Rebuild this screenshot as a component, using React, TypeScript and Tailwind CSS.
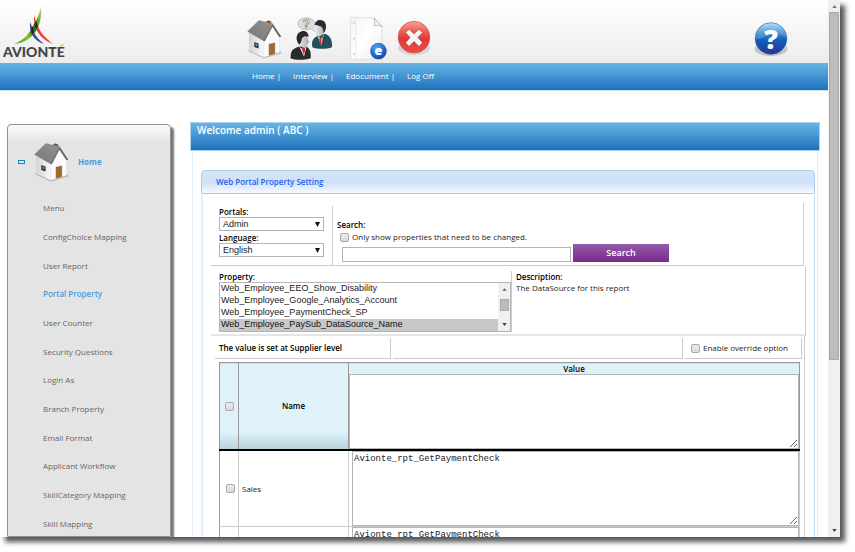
import type { ReactNode } from "react";
import clsx from "clsx";

const NAV_LINKS = ["Home |", "Interview |", "Edocument |", "Log Off"];

const MENU_ITEMS = [
  "Menu",
  "ConfigChoice Mapping",
  "User Report",
  "Portal Property",
  "User Counter",
  "Security Questions",
  "Login As",
  "Branch Property",
  "Email Format",
  "Applicant Workflow",
  "SkillCategory Mapping",
  "Skill Mapping",
];

const PROPERTIES = [
  "Web_Employee_EEO_Show_Disability",
  "Web_Employee_Google_Analytics_Account",
  "Web_Employee_PaymentCheck_SP",
  "Web_Employee_PaySub_DataSource_Name",
];

const ROWS = [
  { id: "row-1", name: "Sales", value: "Avionte_rpt_GetPaymentCheck" },
  { id: "row-2", name: "", value: "Avionte_rpt_GetPaymentCheck" },
];

function Logo() {
  return (
    <svg viewBox="0 0 64 54" className="h-[54px] w-16" role="img" aria-label="Avionte">
      <defs>
        <linearGradient id="logo-green" x1="0" y1="1" x2="1" y2="0">
          <stop offset="0" stopColor="#2f9a2c" />
          <stop offset="0.35" stopColor="#8cc22e" />
          <stop offset="0.55" stopColor="#2c7a2b" />
          <stop offset="0.75" stopColor="#5aa53a" />
          <stop offset="1" stopColor="#dbe66a" />
        </linearGradient>
        <linearGradient id="logo-word" gradientUnits="userSpaceOnUse" x1="0" y1="30" x2="0" y2="50">
          <stop offset="0.48" stopColor="#b4cf3a" />
          <stop offset="0.48" stopColor="#454547" />
        </linearGradient>
      </defs>
      <path d="M38 0C36 8 33 14 30 19C26 27 20 34 11 37C20 36 28 32 33 24C37 17 39 9 38 0Z" fill="url(#logo-green)" />
      <path d="M27 15C26 26 31 34 41 37C35 32 31 27 30 22Z" fill="#3a4ba0" />
      <path d="M31 8C30 20 36 32 50 37C41 30 37 25 35 19C33 15 32 12 31 8Z" fill="#ee3a30" />
      <path d="M28 22L30 19L31 25L29 28Z" fill="#1d2b1a" />
      <path d="M31 17L33 14L35 19L33 23Z" fill="#3d2a14" />
      <text x="0" y="50" fontFamily="Lato, sans-serif" fontWeight="900" fontSize="14" fill="url(#logo-word)">
        AVIONTÉ
      </text>
    </svg>
  );
}

function HouseIcon() {
  return (
    <svg viewBox="102 84 106 120" className="h-10 w-[35px] shrink-0" aria-hidden="true">
      <defs>
        <linearGradient id="roof" x1="0" y1="1" x2="1" y2="0">
          <stop offset="0" stopColor="#777" />
          <stop offset="1" stopColor="#929292" />
        </linearGradient>
        <linearGradient id="wall" x1="0" y1="0" x2="1" y2="0">
          <stop offset="0" stopColor="#d2d2d2" />
          <stop offset="1" stopColor="#fafafa" />
        </linearGradient>
      </defs>
      <path d="M104 180L153 203L207 187L203 180L153 197L110 176Z" fill="#8c8c8c" opacity="0.5" />
      <path d="M160 91L167 88L176 92V108L160 104Z" fill="#c9742d" />
      <path d="M160 91L167 88L176 92L169 95Z" fill="#6d4a32" />
      <path d="M108 124L153 147V199L108 179Z" fill="url(#wall)" />
      <path d="M179 99L201 136V184L153 199V147Z" fill="#fbfbfb" stroke="#d5d5d5" strokeWidth="1" />
      <path d="M104 121L138 88L180 98L153 150Z" fill="url(#roof)" stroke="#666" strokeWidth="1" />
      <path d="M180 98L206 137L200 139L179 107L156 151L152 150Z" fill="#666" />
      <path d="M124 153L137 158V173L124 168Z" fill="#293542" />
      <path d="M128 157L133 159V166L128 164Z" fill="#8397aa" />
      <path d="M169 160L186 156V188L169 193Z" fill="#a2682c" stroke="#7c5023" strokeWidth="1.5" />
    </svg>
  );
}

function InterviewIcon() {
  return (
    <svg viewBox="162 48 132 134" className="h-[45px] w-11" aria-hidden="true">
      <defs>
        <linearGradient id="face" x1="0" y1="0" x2="1" y2="0">
          <stop offset="0" stopColor="#f5f5f5" />
          <stop offset="1" stopColor="#a8a8a8" />
        </linearGradient>
      </defs>
      <path d="M240 72C240 60 228 53 213 53C199 53 189 61 189 71C189 81 200 89 213 89C219 89 224 88 228 86L242 94L236 81C239 79 240 75 240 72Z" fill="#dcdcdc" stroke="#aaa" strokeWidth="2" />
      <text x="214" y="84" textAnchor="middle" fontFamily="Liberation Sans, sans-serif" fontWeight="700" fontSize="36" fill="#fff" stroke="#808080" strokeWidth="2">
        ?
      </text>
      <path d="M232 141C229 122 234 114 249 107L270 101C287 108 292 120 291 141C274 147 246 147 232 141Z" fill="#23505b" />
      <path d="M248 108L259 115L268 102L259 137Z" fill="#eee" />
      <path d="M253 114L259 112L260 136L254 129Z" fill="#d8292e" />
      <path d="M239 77C240 67 249 62 260 64C271 67 273 81 268 94C264 105 252 112 246 107C241 103 241 96 240 91L236 88Z" fill="url(#face)" />
      <path d="M239 75C240 62 252 56 263 61C273 65 276 79 270 93L266 99C265 89 264 83 259 79C252 78 247 72 239 75Z" fill="#292b2e" />
      <path d="M262 112L271 103L262 137Z" fill="#16434d" opacity="0.7" />
      <path d="M167 175C166 155 170 148 186 141L209 136C224 143 229 154 227 174C208 180 183 181 167 175Z" fill="#2b2b2c" />
      <path d="M193 140L205 148L215 138L207 169Z" fill="#eee" />
      <path d="M202 140L209 137L211 151L206 163L201 149Z" fill="#d22d30" />
      <path d="M192 107C202 99 218 102 219 117L223 126L219 129C218 139 213 144 205 142C195 139 187 129 187 115Z" fill="url(#face)" />
      <path d="M188 127C181 111 186 97 200 93C211 90 221 97 221 110C213 107 206 108 202 113C199 119 200 127 193 134Z" fill="#28292a" />
    </svg>
  );
}

function DocumentIcon() {
  return (
    <svg viewBox="342 48 118 134" className="h-[45px] w-[39px]" aria-hidden="true">
      <defs>
        <linearGradient id="paper" x1="0" y1="0" x2="1" y2="1">
          <stop offset="0" stopColor="#f4f4f4" />
          <stop offset="0.5" stopColor="#fff" />
          <stop offset="1" stopColor="#ececec" />
        </linearGradient>
        <radialGradient id="e-ball" cx="0.4" cy="0.3" r="0.75">
          <stop offset="0" stopColor="#56a2ee" />
          <stop offset="1" stopColor="#0a42a5" />
        </radialGradient>
      </defs>
      <path d="M347 52H417L442 79V178H347Z" fill="url(#paper)" stroke="#d6d6d6" strokeWidth="2" />
      <path d="M363 53V177" stroke="#dedede" strokeWidth="2" />
      <path d="M417 53C421 63 420 70 418 76C427 74 434 75 442 79Z" fill="#f8f8f8" stroke="#999" strokeWidth="2" />
      <circle cx="357" cy="67" r="3" fill="#ccc" />
      <circle cx="357" cy="115" r="3" fill="#ccc" />
      <circle cx="357" cy="162" r="3" fill="#ccc" />
      <circle cx="431" cy="153" r="25" fill="url(#e-ball)" />
      <text x="431" y="164" textAnchor="middle" fontFamily="Open Sans, sans-serif" fontWeight="800" fontSize="38" fill="#fff">
        e
      </text>
    </svg>
  );
}

function LogOffIcon() {
  return (
    <svg viewBox="484 60 108 112" className="h-[37px] w-9" aria-hidden="true">
      <defs>
        <linearGradient id="red-ball" x1="0" y1="0" x2="0" y2="1">
          <stop offset="0" stopColor="#f4a39b" />
          <stop offset="0.3" stopColor="#ed625b" />
          <stop offset="0.55" stopColor="#e03a35" />
          <stop offset="1" stopColor="#ed4d42" />
        </linearGradient>
      </defs>
      <ellipse cx="538" cy="144" rx="48" ry="23" fill="#999" opacity="0.3" />
      <circle cx="538" cy="112" r="48" fill="url(#red-ball)" stroke="#cf5149" strokeWidth="2" />
      <path d="M512 98L523 87L538 102L553 87L564 98L550 113L564 129L553 140L538 125L523 140L512 129L526 113Z" fill="#f5f5f5" stroke="#b43733" strokeWidth="2" />
    </svg>
  );
}

function HelpIcon() {
  return (
    <svg viewBox="160 62 108 112" className="h-[37px] w-9" aria-hidden="true">
      <defs>
        <linearGradient id="help-ball" x1="0" y1="0" x2="0" y2="1">
          <stop offset="0" stopColor="#a5ddf8" />
          <stop offset="0.3" stopColor="#3f8dda" />
          <stop offset="0.55" stopColor="#125dbb" />
          <stop offset="1" stopColor="#26348f" />
        </linearGradient>
      </defs>
      <ellipse cx="214" cy="147" rx="50" ry="21" fill="#777" opacity="0.35" />
      <circle cx="214" cy="115" r="48" fill="url(#help-ball)" stroke="#2164af" strokeWidth="2" />
      <path d="M167 116C185 121 206 99 230 101C246 102 255 107 261 113C259 79 237 68 214 69C185 70 166 90 167 116Z" fill="#fff" opacity="0.16" />
      <text x="214" y="147" textAnchor="middle" fontFamily="Open Sans, sans-serif" fontWeight="800" fontSize="82" fill="#fff">
        ?
      </text>
    </svg>
  );
}

function Arrow({ up = false }: { up?: boolean }) {
  return (
    <svg viewBox="0 0 6 4" className="h-[3px] w-[5px]" aria-hidden="true">
      <path d={up ? "M0 4L3 0L6 4Z" : "M0 0H6L3 4Z"} fill={up ? "#777" : "#444"} />
    </svg>
  );
}

function Checkbox({ label, id }: { label?: string; id: string }) {
  return (
    <input
      type="checkbox"
      id={id}
      aria-label={label}
      className="size-[9px] shrink-0 appearance-none rounded-[2px] border border-[#a9a9a9] bg-linear-to-b from-[#ededed] to-[#d9d9d9] checked:bg-[#888]"
    />
  );
}

function Dropdown({ id, label, value }: { id: string; label: string; value: string }) {
  return (
    <div>
      <label htmlFor={id} className="block h-[11px] font-semibold leading-[11px] text-black">
        {label}
      </label>
      <div className="grid items-center">
        <select
          id={id}
          className="col-start-1 row-start-1 h-[14px] w-full appearance-none border border-[#b5b5b5] bg-white px-[3px] font-['Liberation_Sans',Arial,sans-serif] text-[9px] leading-3 text-[#222]"
        >
          <option>{value}</option>
        </select>
        <svg viewBox="0 0 5 5" className="pointer-events-none col-start-1 row-start-1 mr-1 size-[5px] justify-self-end" aria-hidden="true">
          <path d="M0 0H5L2.5 5Z" fill="#111" />
        </svg>
      </div>
    </div>
  );
}

function Header() {
  return (
    <header>
      <div className="flex h-[63px] items-start bg-linear-to-b from-white to-[#ececec]">
        <div className="ml-[3px] mt-[7px] w-[244px]">
          <Logo />
        </div>
        <div className="flex items-start">
          <a href="#home" aria-label="Home" className="mt-[19px]">
            <HouseIcon />
          </a>
          <a href="#interview" aria-label="Interview" className="ml-[7px] mt-4">
            <InterviewIcon />
          </a>
          <a href="#edocument" aria-label="Edocument" className="ml-4 mt-4">
            <DocumentIcon />
          </a>
          <a href="#logoff" aria-label="Log off" className="ml-2 mt-5">
            <LogOffIcon />
          </a>
        </div>
        <button type="button" aria-label="Help" className="ml-auto mr-[39px] mt-[21px]">
          <HelpIcon />
        </button>
      </div>
      <nav className="flex h-7 items-center gap-3 border-b border-[#cfe0f0] bg-linear-to-b from-[#66b5e6] to-[#1d72bd] pb-[2px] pl-[252px] font-medium text-white">
        {NAV_LINKS.map((link) => (
          <a key={link} href="#nav">
            {link}
          </a>
        ))}
      </nav>
    </header>
  );
}

function Sidebar() {
  return (
    <aside className="mt-[33px] w-[164px] shrink-0 rounded-t-[4px] border border-[#929292] bg-linear-to-b from-[#fafafa] to-[#e4e4e4] to-[18px] shadow-[3px_3px_2px_#777]">
      <div className="mt-[17px] flex h-10 items-center pl-[10px]">
        <button type="button" aria-label="Collapse Home" className="h-1 w-[7px] border border-[#1786bd] bg-[#cdeafa]" />
        <span className="ml-[9px]">
          <HouseIcon />
        </span>
        <a href="#home" className="ml-[9px] font-bold text-[#4a9cdb]">
          Home
        </a>
      </div>
      <ul className="mt-3 grid h-[344px] auto-rows-fr pl-[35px]">
        {MENU_ITEMS.map((item) => (
          <li key={item} className="flex items-center">
            <a href="#menu" className={clsx(item === "Portal Property" ? "font-semibold text-[#4a9cdb]" : "text-[#666]")}>
              {item}
            </a>
          </li>
        ))}
      </ul>
    </aside>
  );
}

function SearchArea() {
  return (
    <div className="mr-[10px] flex border-b border-r border-[#ccc] pt-[3px]">
      <div className="flex w-[122px] flex-col gap-[1px] border-r border-[#ccc] pb-2 pl-2 pr-2">
        <Dropdown id="portals" label="Portals:" value="Admin" />
        <Dropdown id="language" label="Language:" value="English" />
      </div>
      <div className="flex flex-1 flex-col pl-1 pt-[13px]">
        <label htmlFor="search" className="font-semibold leading-[11px] text-black">
          Search:
        </label>
        <div className="ml-[3px] flex h-[14px] items-center gap-[3px]">
          <Checkbox id="changed" />
          <label htmlFor="changed">Only show properties that need to be changed.</label>
        </div>
        <div className="ml-[5px] flex items-end gap-[2px]">
          <input id="search" type="text" className="h-[15px] w-[229px] border border-[#b5b5b5] bg-white px-1" />
          <button
            type="button"
            className="h-[18px] w-24 bg-linear-to-b from-[#955ba9] to-[#79278b] text-[9px] font-semibold text-white"
          >
            Search
          </button>
        </div>
      </div>
    </div>
  );
}

function PropertyArea() {
  return (
    <div className="mr-2 flex border-b-2 border-r border-b-[#e5e5e5] border-r-[#ccc] pb-[2px] pt-1">
      <div className="flex w-[301px] flex-col border-r border-[#ccc] pl-2">
        <label htmlFor="property" className="font-semibold leading-[11px] text-black">
          Property:
        </label>
        <div className="flex border border-[#b5b5b5]">
          <select
            id="property"
            size={4}
            defaultValue={PROPERTIES[3]}
            className="h-12 flex-1 appearance-none overflow-hidden bg-white font-['Liberation_Sans',Arial,sans-serif] text-[9px] text-[#222]"
          >
            {PROPERTIES.map((property) => (
              <option
                key={property}
                className="h-3 min-h-0 px-[1px] py-0 leading-3 checked:bg-[#c8c8c8] checked:bg-linear-to-b checked:from-[#c8c8c8] checked:to-[#c8c8c8]"
              >
                {property}
              </option>
            ))}
          </select>
          <div className="flex w-3 flex-col items-center bg-[#f0f0f0] py-[5px]">
            <Arrow up />
            <span className="mt-2 h-3 w-[9px] border border-[#aaa] bg-[#bcbcbc]" />
            <span className="mt-auto flex">
              <Arrow />
            </span>
          </div>
        </div>
      </div>
      <div className="pl-1">
        <h3 className="font-semibold leading-[11px] text-black">Description:</h3>
        <p className="leading-[11px]">The DataSource for this report</p>
      </div>
    </div>
  );
}

function HeadCell({ children, className }: { children: ReactNode; className?: string }) {
  return (
    <th
      className={clsx(
        "border border-b-2 border-[#999] border-b-black bg-linear-to-b from-[#dff2fa] from-80% to-[#b7d0da] p-0 font-semibold text-black",
        className,
      )}
    >
      {children}
    </th>
  );
}

function ValueTable() {
  return (
    <table className="w-full border-collapse">
      <thead>
        <tr>
          <HeadCell className="w-[19px]">
            <div className="flex justify-center">
              <Checkbox id="all" label="Select all" />
            </div>
          </HeadCell>
          <HeadCell className="w-[110px]">Name</HeadCell>
          <HeadCell>
            <label htmlFor="value-all" className="block leading-[11px]">
              Value
            </label>
            <textarea id="value-all" className="block h-[75px] w-full border border-[#b5b5b5] bg-white" />
          </HeadCell>
        </tr>
      </thead>
      <tbody>
        {ROWS.map((row) => (
          <tr key={row.id}>
            <td className="border border-[#ccc] border-l-[#999] p-0">
              <div className="flex justify-end pr-[3px]">
                <Checkbox id={row.id} label={`Select ${row.name}`} />
              </div>
            </td>
            <td className="border border-[#ccc] p-0 pl-[3px]">{row.name}</td>
            <td className="border border-[#ccc] p-0 pl-[3px]">
              <textarea
                aria-label={`${row.name} value`}
                defaultValue={row.value}
                className="block h-[75px] w-full border border-[#b5b5b5] bg-white px-[1px] pt-[2px] font-['Liberation_Mono',monospace] text-[9px] leading-[11px]"
              />
            </td>
          </tr>
        ))}
      </tbody>
    </table>
  );
}

function PropertyPanel() {
  return (
    <section className="ml-2 mr-[2px]">
      <h2 className="flex h-6 items-center rounded-t-[4px] border border-[#afc9e9] bg-linear-to-b from-[#d5e4f6] via-[#cfe0fa] to-[#f5f9ff] pl-[14px] font-semibold text-[#1f62ee]">
        Web Portal Property Setting
      </h2>
      <div className="mt-[1px] border-l-2 border-r border-l-[#e2eefb] border-r-[#b9dcfa] pl-2 pt-2">
        <SearchArea />
        <div className="pt-[1px]">
          <PropertyArea />
        </div>
        <div className="mr-[9px] border-r border-[#ccc] pr-[2px]">
          <div className="flex h-[23px] gap-[2px] pl-1 pt-[2px]">
            <div className="flex w-[176px] items-center border-b border-r border-[#ccc] pl-1 font-semibold text-black">
              The value is set at Supplier level
            </div>
            <div className="flex-1 border-b border-r border-[#ccc]" />
            <div className="flex w-[117px] items-center gap-[3px] border-b border-r border-[#ccc] pl-[6px]">
              <Checkbox id="override" />
              <label htmlFor="override">Enable override option</label>
            </div>
          </div>
          <div className="pl-2 pr-[2px] pt-[3px]">
            <ValueTable />
          </div>
        </div>
      </div>
    </section>
  );
}

function PageScrollbar() {
  return (
    <div className="flex w-3 shrink-0 flex-col items-center bg-[#f0f0f0] pt-[5px]">
      <Arrow up />
      <div className="mt-1 h-[348px] w-[10px] border border-[#aaa] bg-[#bcbcbc]" />
      <div className="mb-[5px] mt-auto">
        <Arrow />
      </div>
    </div>
  );
}

export default function App() {
  return (
    <div className="h-screen overflow-hidden bg-white pb-[15px] pr-[15px] font-['Open_Sans',sans-serif] text-[8px] leading-3 text-[#222]">
      <div className="flex h-full bg-white shadow-[5px_5px_5px_#555]">
        <div className="flex min-w-0 flex-1 flex-col overflow-hidden">
          <Header />
          <div className="flex min-h-0 flex-1 pl-[7px]">
            <Sidebar />
            <main className="ml-[19px] mr-2 mt-[31px] min-w-0 flex-1">
              <h1 className="h-[29px] border border-[#add3ee] bg-linear-to-b from-[#66b5e6] to-[#1d72bd] pl-[6px] pt-[1px] text-[10px] font-semibold text-white">
                Welcome admin ( ABC )
              </h1>
              <div className="mx-[2px] border-x border-[#e2eefb] pt-[19px]">
                <PropertyPanel />
              </div>
            </main>
          </div>
        </div>
        <PageScrollbar />
      </div>
    </div>
  );
}
